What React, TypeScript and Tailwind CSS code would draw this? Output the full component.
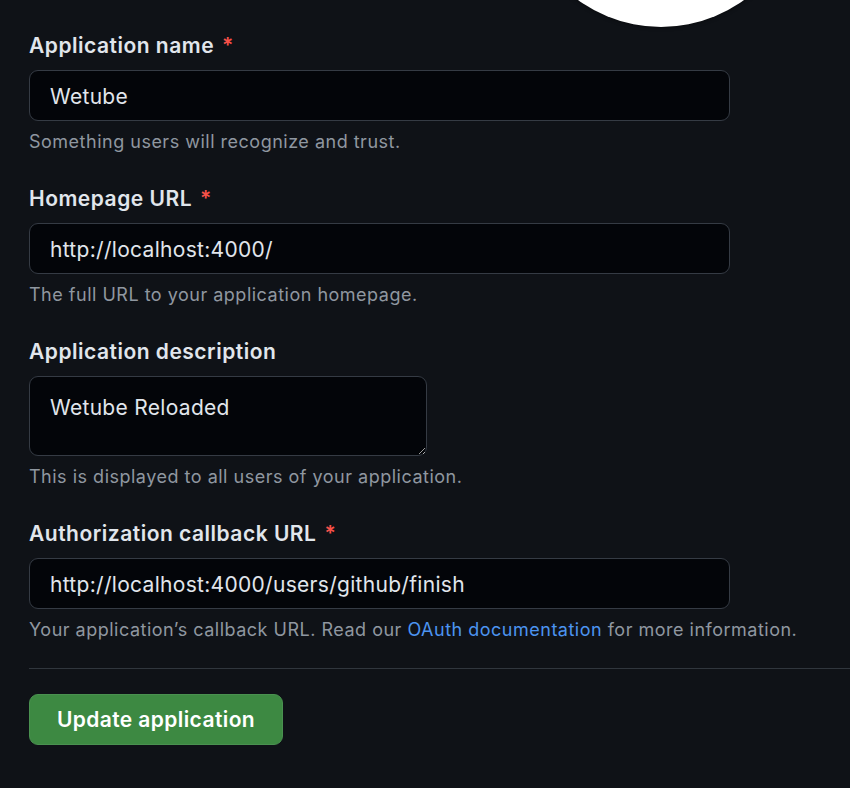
const Field = ({
  label,
  required,
  hint,
  children,
}: {
  label: string;
  required?: boolean;
  hint: React.ReactNode;
  children: React.ReactNode;
}) => (
  <div className="flex flex-col">
    <label className="text-[21px] leading-[30px] font-semibold tracking-[0.5px] text-[#e1e6ec]">
      {label}
      {required && <span className="ml-[8px] text-[#f85149]">*</span>}
    </label>
    <div className="mt-[9px]">{children}</div>
    <p className="mt-[9px] text-[18px] leading-[24px] tracking-[0.5px] text-[#8f97a0]">{hint}</p>
  </div>
);

const inputCls =
  "block h-[51px] w-[701px] rounded-[9px] border border-[#353b44] bg-[#030509] px-[20px] pt-[2px] text-[21px] tracking-[0.3px] text-[#e1e6ec] outline-none";

export default function App() {
  return (
    <div
      className="relative h-[788px] w-[850px] overflow-hidden bg-[#0f1217]"
      style={{ fontFamily: "Inter, 'Noto Sans', 'Liberation Sans', sans-serif" }}
    >
      {/* avatar peeking from the top */}
      <div className="absolute left-[520px] top-[-255px] h-[282px] w-[282px] rounded-full bg-white shadow-[0_0_4px_rgba(0,0,0,0.6)]" />

      <form className="flex flex-col gap-[30px] pl-[29px] pt-[31px]">
        <Field label="Application name" required hint="Something users will recognize and trust.">
          <input className={inputCls} defaultValue="Wetube" />
        </Field>
        <Field label="Homepage URL" required hint="The full URL to your application homepage.">
          <input className={inputCls} defaultValue="http://localhost:4000/" />
        </Field>
        <Field label="Application description" hint="This is displayed to all users of your application.">
          <textarea
            className="block h-[80px] w-[398px] resize-y rounded-[9px] border border-[#353b44] bg-[#030509] px-[20px] pt-[17px] text-[21px] leading-[28px] tracking-[0.3px] text-[#e1e6ec] outline-none"
            defaultValue="Wetube Reloaded"
          />
        </Field>
        <div>
          <Field
            label="Authorization callback URL"
            required
            hint={
              <>
                Your application’s callback URL. Read our{" "}
                <a className="text-[#4c94f0]">OAuth documentation</a> for more information.
              </>
            }
          >
            <input className={inputCls} defaultValue="http://localhost:4000/users/github/finish" />
          </Field>
          <div className="mt-[26px] h-px w-full bg-[#30363d]" />
          <button
            type="button"
            className="mt-[25px] h-[51px] w-[254px] rounded-[9px] border border-[#4a9150] bg-[#3d8942] text-[21px] font-semibold tracking-[0.4px] text-white"
          >
            Update application
          </button>
        </div>
      </form>
    </div>
  );
}
